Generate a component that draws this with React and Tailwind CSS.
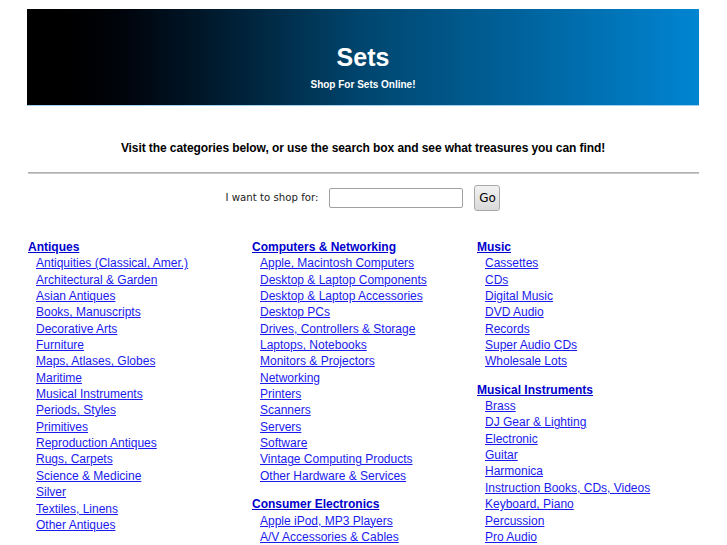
import React from "react";

const groups = [
  [
    { title: "Antiques", items: ["Antiquities (Classical, Amer.)", "Architectural & Garden", "Asian Antiques", "Books, Manuscripts", "Decorative Arts", "Furniture", "Maps, Atlases, Globes", "Maritime", "Musical Instruments", "Periods, Styles", "Primitives", "Reproduction Antiques", "Rugs, Carpets", "Science & Medicine", "Silver", "Textiles, Linens", "Other Antiques"] },
    { title: "Art", items: ["Drawings", "Folk Art", "Mixed Media", "Paintings", "Photographs", "Posters", "Prints", "Sculpture, Carvings"] },
  ],
  [
    { title: "Computers & Networking", items: ["Apple, Macintosh Computers", "Desktop & Laptop Components", "Desktop & Laptop Accessories", "Desktop PCs", "Drives, Controllers & Storage", "Laptops, Notebooks", "Monitors & Projectors", "Networking", "Printers", "Scanners", "Servers", "Software", "Vintage Computing Products", "Other Hardware & Services"] },
    { title: "Consumer Electronics", items: ["Apple iPod, MP3 Players", "A/V Accessories & Cables", "Car Electronics", "DVD & Home Theater", "Gadgets & Other Electronics"] },
  ],
  [
    { title: "Music", items: ["Cassettes", "CDs", "Digital Music", "DVD Audio", "Records", "Super Audio CDs", "Wholesale Lots"] },
    { title: "Musical Instruments", items: ["Brass", "DJ Gear & Lighting", "Electronic", "Guitar", "Harmonica", "Instruction Books, CDs, Videos", "Keyboard, Piano", "Percussion", "Pro Audio", "String", "Woodwind"] },
  ],
];

export default function App() {
  return (
    <div className="bg-white min-h-screen" style={{ fontFamily: '"Liberation Sans", Arial, sans-serif' }}>
      <div className="w-[672px] ml-[27px] pt-[9px]">
        <div className="h-[97px] bg-gradient-to-r from-[#000000] via-[#00466f] to-[#0085d2] border-b border-[#9fd0f0] flex flex-col items-center">
          <div className="text-white font-bold text-[25px] leading-[30px] mt-[33px]">Sets</div>
          <div className="text-white font-bold text-[10px] leading-[12px] mt-[7px]">Shop For Sets Online!</div>
        </div>

        <div className="text-center font-bold text-[12px] leading-[14px] text-black mt-[35px] tracking-[-0.085px]">
          Visit the categories below, or use the search box and see what treasures you can find!
        </div>

        <div className="mt-[17px] ml-px h-[2px] bg-[#c8c8c8] border-t border-[#b0b0b0]"></div>

        <div className="flex items-center justify-center mt-[11px]">
          <span className="text-[10.2px] text-[#222]" style={{ fontFamily: '"DejaVu Sans", sans-serif' }}>I want to shop for:</span>
          <input type="text" className="ml-[11px] w-[134px] h-[20px] border border-[#a0a0a0] rounded-[2px] bg-white" />
          <button className="ml-[11px] w-[26px] h-[26px] rounded-[3px] border border-[#a8a8a8] bg-gradient-to-b from-[#f2f2f2] to-[#d9d9d9] text-[12px] text-black" style={{ fontFamily: '"DejaVu Sans", sans-serif' }}>Go</button>
        </div>

        <div className="grid grid-cols-[224px_225px_1fr] mt-[28px] pl-px">
          {groups.map((col, ci) => (
            <div key={ci} className="flex flex-col gap-[12px]">
              {col.map((g) => (
                <div key={g.title} className="flex flex-col">
                  <a href="#" className="font-bold text-[12px] leading-[16.35px] text-[#0000cc] underline self-start">{g.title}</a>
                  {g.items.map((it) => (
                    <a key={it} href="#" className="text-[12px] leading-[16.35px] text-[#1a1aee] underline ml-[8px] self-start whitespace-nowrap">{it}</a>
                  ))}
                </div>
              ))}
            </div>
          ))}
        </div>
        <div className="h-[40px]"></div>
      </div>
    </div>
  );
}
